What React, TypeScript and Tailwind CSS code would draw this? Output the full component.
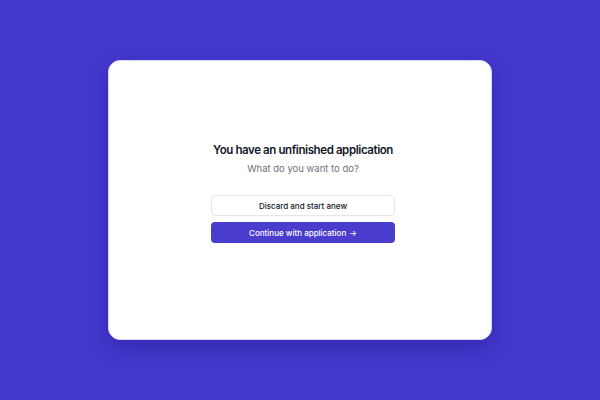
import React from "react";

export default function App() {
  return (
    <div
      className="w-[600px] h-[400px] bg-[#4439cc] flex items-center justify-center"
      style={{ fontFamily: "Inter, 'Noto Sans', sans-serif" }}
    >
      <div className="w-[384px] h-[280px] bg-white rounded-xl border border-[#d9d6f5] shadow-[0_8px_24px_rgba(30,20,140,0.45)] flex flex-col items-center justify-center pl-[6px] pb-[14px]">
        <h1 className="text-[11.5px] leading-[14px] font-semibold text-[#111827] tracking-[-0.4px]">
          You have an unfinished application
        </h1>
        <p className="mt-[6px] text-[9.5px] leading-[12px] text-[#71717a] tracking-[0px]">What do you want to do?</p>
        <div className="mt-[20px] w-[184px] flex flex-col gap-[6px]">
          <button className="h-[21px] w-full rounded-[4px] border border-[#e5e7eb] bg-white text-[8px] font-medium text-[#111827]">
            Discard and start anew
          </button>
          <button className="h-[21px] w-full rounded-[4px] bg-[#4a3ccc] text-[8px] font-medium text-white flex items-center justify-center gap-[3px]">
            Continue with application
            <span>→</span>
          </button>
        </div>
      </div>
    </div>
  );
}
